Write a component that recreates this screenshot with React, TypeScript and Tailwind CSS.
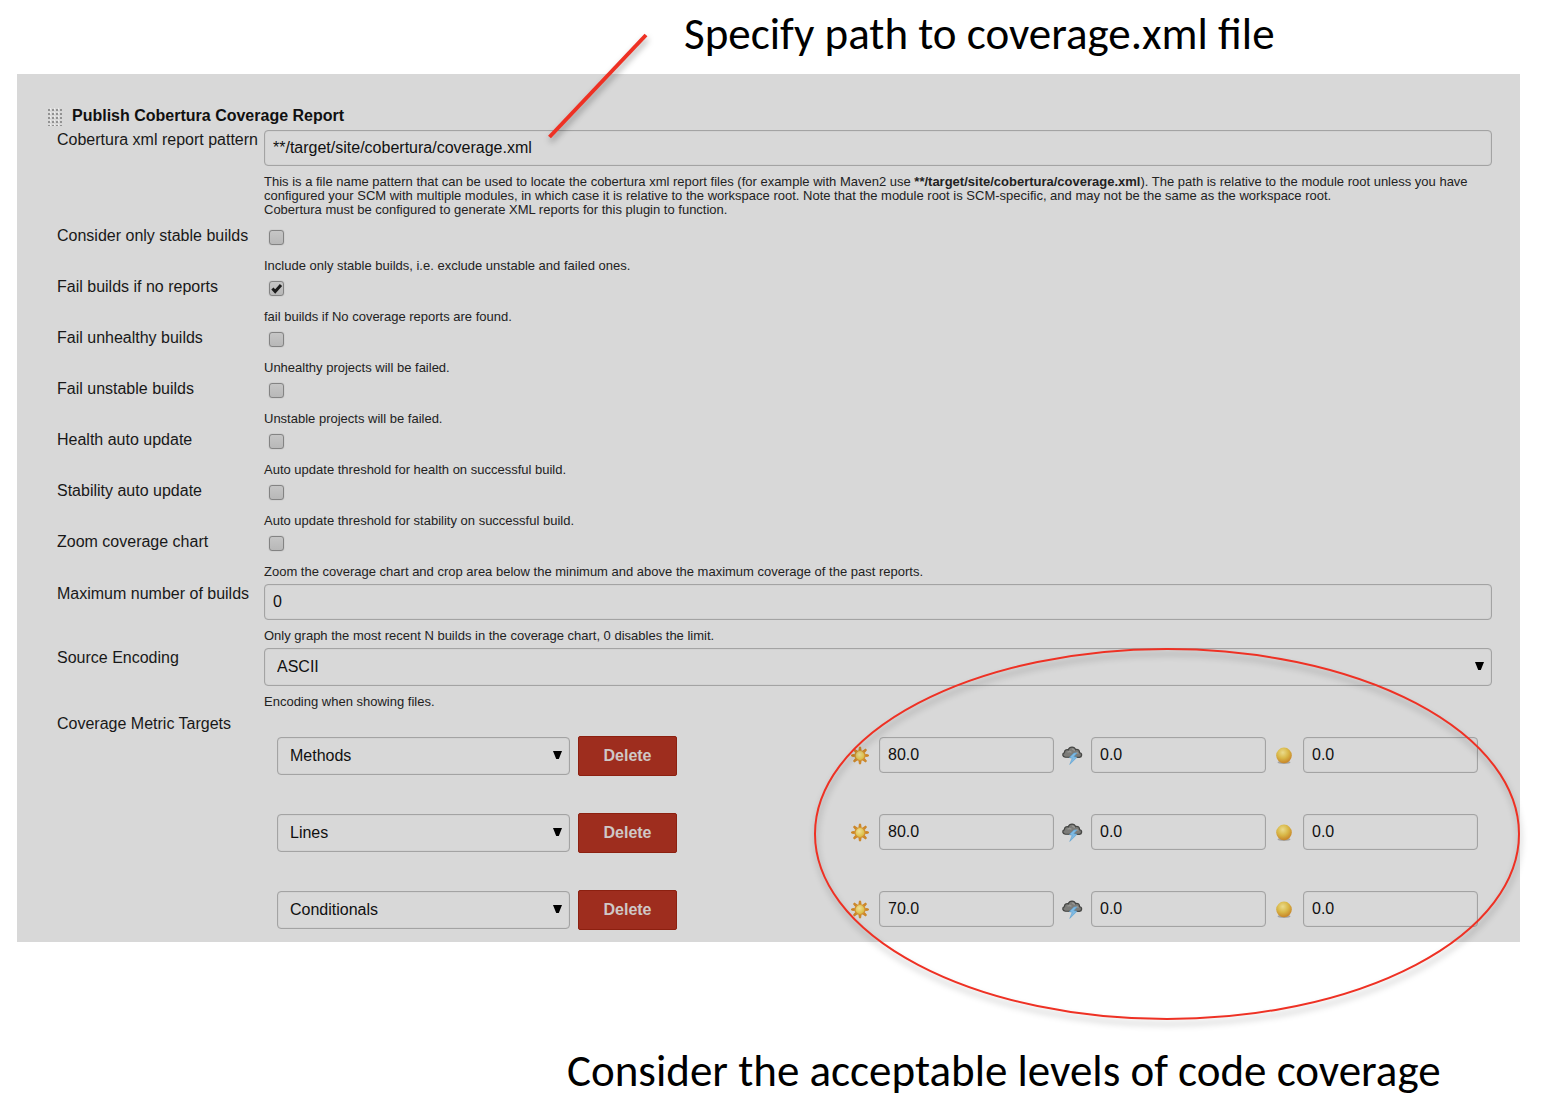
import type { ReactNode } from "react";

const control =
  "block h-9 w-full min-w-0 rounded border border-[#a3a3a3] bg-transparent px-2 text-base text-[#101010] shadow-[inset_0_0_1px_#a3a3a3] outline-none";

function Help({ children }: { children: ReactNode }) {
  return <p className="text-[13px] leading-[14px] text-[#222222]">{children}</p>;
}

function Row({ label, id, children }: { label: string; id: string; children: ReactNode }) {
  return (
    <div className="grid grid-cols-[207px_minmax(0,1fr)]">
      <label htmlFor={id} className="text-base leading-5 whitespace-nowrap text-[#181818]">
        {label}
      </label>
      <div>{children}</div>
    </div>
  );
}

function SelectBox({ id, label, value, options }: { id: string; label?: string; value: string; options: string[] }) {
  return (
    <div className="relative">
      <select
        id={id}
        aria-label={label}
        defaultValue={value}
        className="block h-[38px] w-full appearance-none rounded border border-[#a3a3a3] bg-transparent px-3 text-base text-[#101010] shadow-[inset_0_0_1px_#a3a3a3] outline-none"
      >
        {options.map((o) => (
          <option key={o}>{o}</option>
        ))}
      </select>
      <svg viewBox="0 0 9 8" className="pointer-events-none absolute top-[14px] right-2 h-2 w-[9px]" aria-hidden="true">
        <path d="M0 0H9L5.8 8H3.2Z" fill="#000" />
      </svg>
    </div>
  );
}

function CheckRow({ id, label, help, checked = false }: { id: string; label: string; help: string; checked?: boolean }) {
  return (
    <Row id={id} label={label}>
      <div className="pt-1 pb-1">
        <div className="relative ml-[5px] size-[15px]">
          <input
            id={id}
            type="checkbox"
            defaultChecked={checked}
            className="peer block size-[15px] appearance-none rounded-[3px] border border-[#838383] bg-linear-to-b from-[#c6c6c6] to-[#b8b8b8] shadow-[0_0_1px_#8a8a8a]"
          />
          <svg
            viewBox="0 0 15 15"
            className="pointer-events-none absolute top-0 left-0 hidden size-[15px] peer-checked:block"
            aria-hidden="true"
          >
            <path d="M3.4 7.6 6.2 10.6 12 4" fill="none" stroke="#1c1c1c" strokeWidth="3" />
          </svg>
        </div>
        <div className="pt-[14px]">
          <Help>{help}</Help>
        </div>
      </div>
    </Row>
  );
}

function Sun() {
  return (
    <svg viewBox="0 0 22 20" className="h-5 w-[22px] shrink-0" aria-hidden="true">
      <defs>
        <radialGradient id="sunFill" cx="42%" cy="38%">
          <stop offset="0" stopColor="#eee09a" />
          <stop offset="1" stopColor="#dcc04a" />
        </radialGradient>
      </defs>
      {[0, 45, 90, 135, 180, 225, 270, 315].map((a) => (
        <path key={a} d="M10 5 10.4 2.1H11.6L12 5Z" fill="#cc8525" stroke="#cc8525" strokeWidth="1" transform={`rotate(${a} 11 10.5)`} />
      ))}
      <circle cx="11" cy="10.5" r="5" fill="url(#sunFill)" stroke="#d29030" strokeWidth="1.2" />
    </svg>
  );
}

function Storm() {
  return (
    <svg viewBox="0 0 22 20" className="h-5 w-[22px] shrink-0" aria-hidden="true">
      <path
        d="M4.2 12.2C1.4 12 .9 8.6 3.4 7.7 3.3 5.3 5.6 4 7.3 4.8 8.6 1.2 13.4 1.2 14.6 4.6 17 3.9 18.9 5.5 18.4 7.7 21.5 8.3 21.2 12 18.4 12.3Z"
        fill="#7c7c79"
        stroke="#464745"
        strokeWidth="1.3"
      />
      <path d="M6.5 7.2C8.2 6 9.5 6.4 10.4 7.5M11 4.2C12.7 4 13.4 5 13.5 6M14.6 8.2C15.6 7.3 17 7.7 17.3 8.8" fill="none" stroke="#969692" strokeWidth="1.3" />
      <path d="M13 8 8.3 12.6 11.2 13.3 8.8 19.4 16 12.2 12.8 11.6 16 8Z" fill="#7db9e3" stroke="#5c9fd0" strokeWidth=".6" />
    </svg>
  );
}

function Ball() {
  return (
    <svg viewBox="0 0 22 20" className="h-5 w-[22px] shrink-0" aria-hidden="true">
      <defs>
        <radialGradient id="ballFill" cx="42%" cy="32%" r="65%">
          <stop offset="0" stopColor="#eadb8c" />
          <stop offset=".55" stopColor="#d9b848" />
          <stop offset="1" stopColor="#c98a2b" />
        </radialGradient>
      </defs>
      <ellipse cx="11" cy="17.4" rx="6.5" ry="1.6" fill="#8f8f8f" opacity=".7" />
      <circle cx="11" cy="10.4" r="7.8" fill="url(#ballFill)" />
    </svg>
  );
}

const metrics = [
  { name: "Methods", healthy: "80.0" },
  { name: "Lines", healthy: "80.0" },
  { name: "Conditionals", healthy: "70.0" },
];

function Threshold({ label, value, icon }: { label: string; value: string; icon: ReactNode }) {
  return (
    <label className="flex w-[205px] items-center gap-2">
      {icon}
      <input type="text" aria-label={label} defaultValue={value} className={control} />
    </label>
  );
}

function Target({ name, healthy }: { name: string; healthy: string }) {
  return (
    <div className="flex items-center">
      <div className="w-[293px]">
        <SelectBox id={`metric-${name}`} label="Metric" value={name} options={["Methods", "Lines", "Conditionals"]} />
      </div>
      <button
        type="button"
        className="ml-2 h-10 w-[99px] rounded-[2px] border border-[#8c2010] bg-[#9e2d1e] text-base font-bold text-[#cfc8c6]"
      >
        Delete
      </button>
      <div className="mb-[2px] ml-auto flex gap-[7px]">
        <Threshold label={`${name} healthy threshold`} value={healthy} icon={<Sun />} />
        <Threshold label={`${name} unhealthy threshold`} value="0.0" icon={<Storm />} />
        <Threshold label={`${name} unstable threshold`} value="0.0" icon={<Ball />} />
      </div>
    </div>
  );
}

export default function App() {
  return (
    <main className="bg-white pr-[22px] pl-[17px] font-['Liberation_Sans',Arial,sans-serif]">
      <h1 className="h-[74px] pl-[667px] font-[Carlito,Lato,sans-serif] text-[45px] leading-[68px] whitespace-nowrap text-black">
        Specify path to coverage.xml file
      </h1>

      <form className="relative bg-[#d8d8d8] pt-8 pr-7 pb-3 pl-[31px]">
        <div className="flex h-6 items-start">
          <svg viewBox="0 0 14 18" className="mt-[2px] h-[18px] w-[14px]" aria-hidden="true">
            <defs>
              <pattern id="grip" width="4" height="4" patternUnits="userSpaceOnUse">
                <path d="M0 1H2V3H0Z" fill="#929292" />
                <path d="M2 0H3V2H2Z" fill="#ececec" />
              </pattern>
            </defs>
            <rect width="14" height="18" fill="url(#grip)" />
          </svg>
          <h2 className="ml-[10px] text-base leading-5 font-bold text-[#101010]">Publish Cobertura Coverage Report</h2>
        </div>

        <div className="pl-[9px]">
          <Row id="pattern" label="Cobertura xml report pattern">
            <input id="pattern" type="text" defaultValue="**/target/site/cobertura/coverage.xml" className={control} />
            <div className="pt-[9px] pb-[9px]">
              <Help>
                This is a file name pattern that can be used to locate the cobertura xml report files (for example with
                Maven2 use <b>**/target/site/cobertura/coverage.xml</b>). The path is relative to the module root unless
                you have configured your SCM with multiple modules, in which case it is relative to the workspace root.
                Note that the module root is SCM-specific, and may not be the same as the workspace root.
                <br />
                Cobertura must be configured to generate XML reports for this plugin to function.
              </Help>
            </div>
          </Row>

          <div className="pb-px">
            <CheckRow id="stable" label="Consider only stable builds" help="Include only stable builds, i.e. exclude unstable and failed ones." />
            <CheckRow id="noreports" label="Fail builds if no reports" help="fail builds if No coverage reports are found." checked />
            <CheckRow id="unhealthy" label="Fail unhealthy builds" help="Unhealthy projects will be failed." />
            <CheckRow id="unstable" label="Fail unstable builds" help="Unstable projects will be failed." />
            <CheckRow id="health" label="Health auto update" help="Auto update threshold for health on successful build." />
            <CheckRow id="stability" label="Stability auto update" help="Auto update threshold for stability on successful build." />
            <CheckRow id="zoom" label="Zoom coverage chart" help="Zoom the coverage chart and crop area below the minimum and above the maximum coverage of the past reports." />
          </div>

          <Row id="max" label="Maximum number of builds">
            <input id="max" type="text" defaultValue="0" className={control} />
            <div className="pt-[9px] pb-[5px]">
              <Help>Only graph the most recent N builds in the coverage chart, 0 disables the limit.</Help>
            </div>
          </Row>

          <Row id="encoding" label="Source Encoding">
            <SelectBox id="encoding" value="ASCII" options={["ASCII", "UTF-8"]} />
            <div className="pt-[9px] pb-[5px]">
              <Help>Encoding when showing files.</Help>
            </div>
          </Row>

          <Row id="metric-Methods" label="Coverage Metric Targets">
            <div className="flex flex-col gap-[37px] pt-[22px] pr-[14px] pl-[13px]">
              {metrics.map((m) => (
                <Target key={m.name} {...m} />
              ))}
            </div>
          </Row>
        </div>

        <svg
          viewBox="0 0 110 115"
          className="pointer-events-none absolute -top-[44px] left-[527px] h-[115px] w-[110px] drop-shadow-[1px_4px_3px_rgba(0,0,0,0.35)]"
          aria-hidden="true"
        >
          <path d="M5.5 107 102 5" stroke="#ee3124" strokeWidth="4" />
        </svg>
        <svg
          viewBox="0 0 706 372"
          className="pointer-events-none absolute top-[574px] right-0 h-[372px] w-[706px] overflow-visible drop-shadow-[1px_5px_3px_rgba(0,0,0,0.3)]"
          aria-hidden="true"
        >
          <ellipse cx="353" cy="186" rx="352" ry="185" fill="none" stroke="#ee3124" strokeWidth="2" />
        </svg>
      </form>

      <p className="mt-[95px] pl-[550px] font-[Carlito,Lato,sans-serif] text-[45px] leading-[68px] whitespace-nowrap text-black">
        Consider the acceptable levels of code coverage
      </p>
    </main>
  );
}
